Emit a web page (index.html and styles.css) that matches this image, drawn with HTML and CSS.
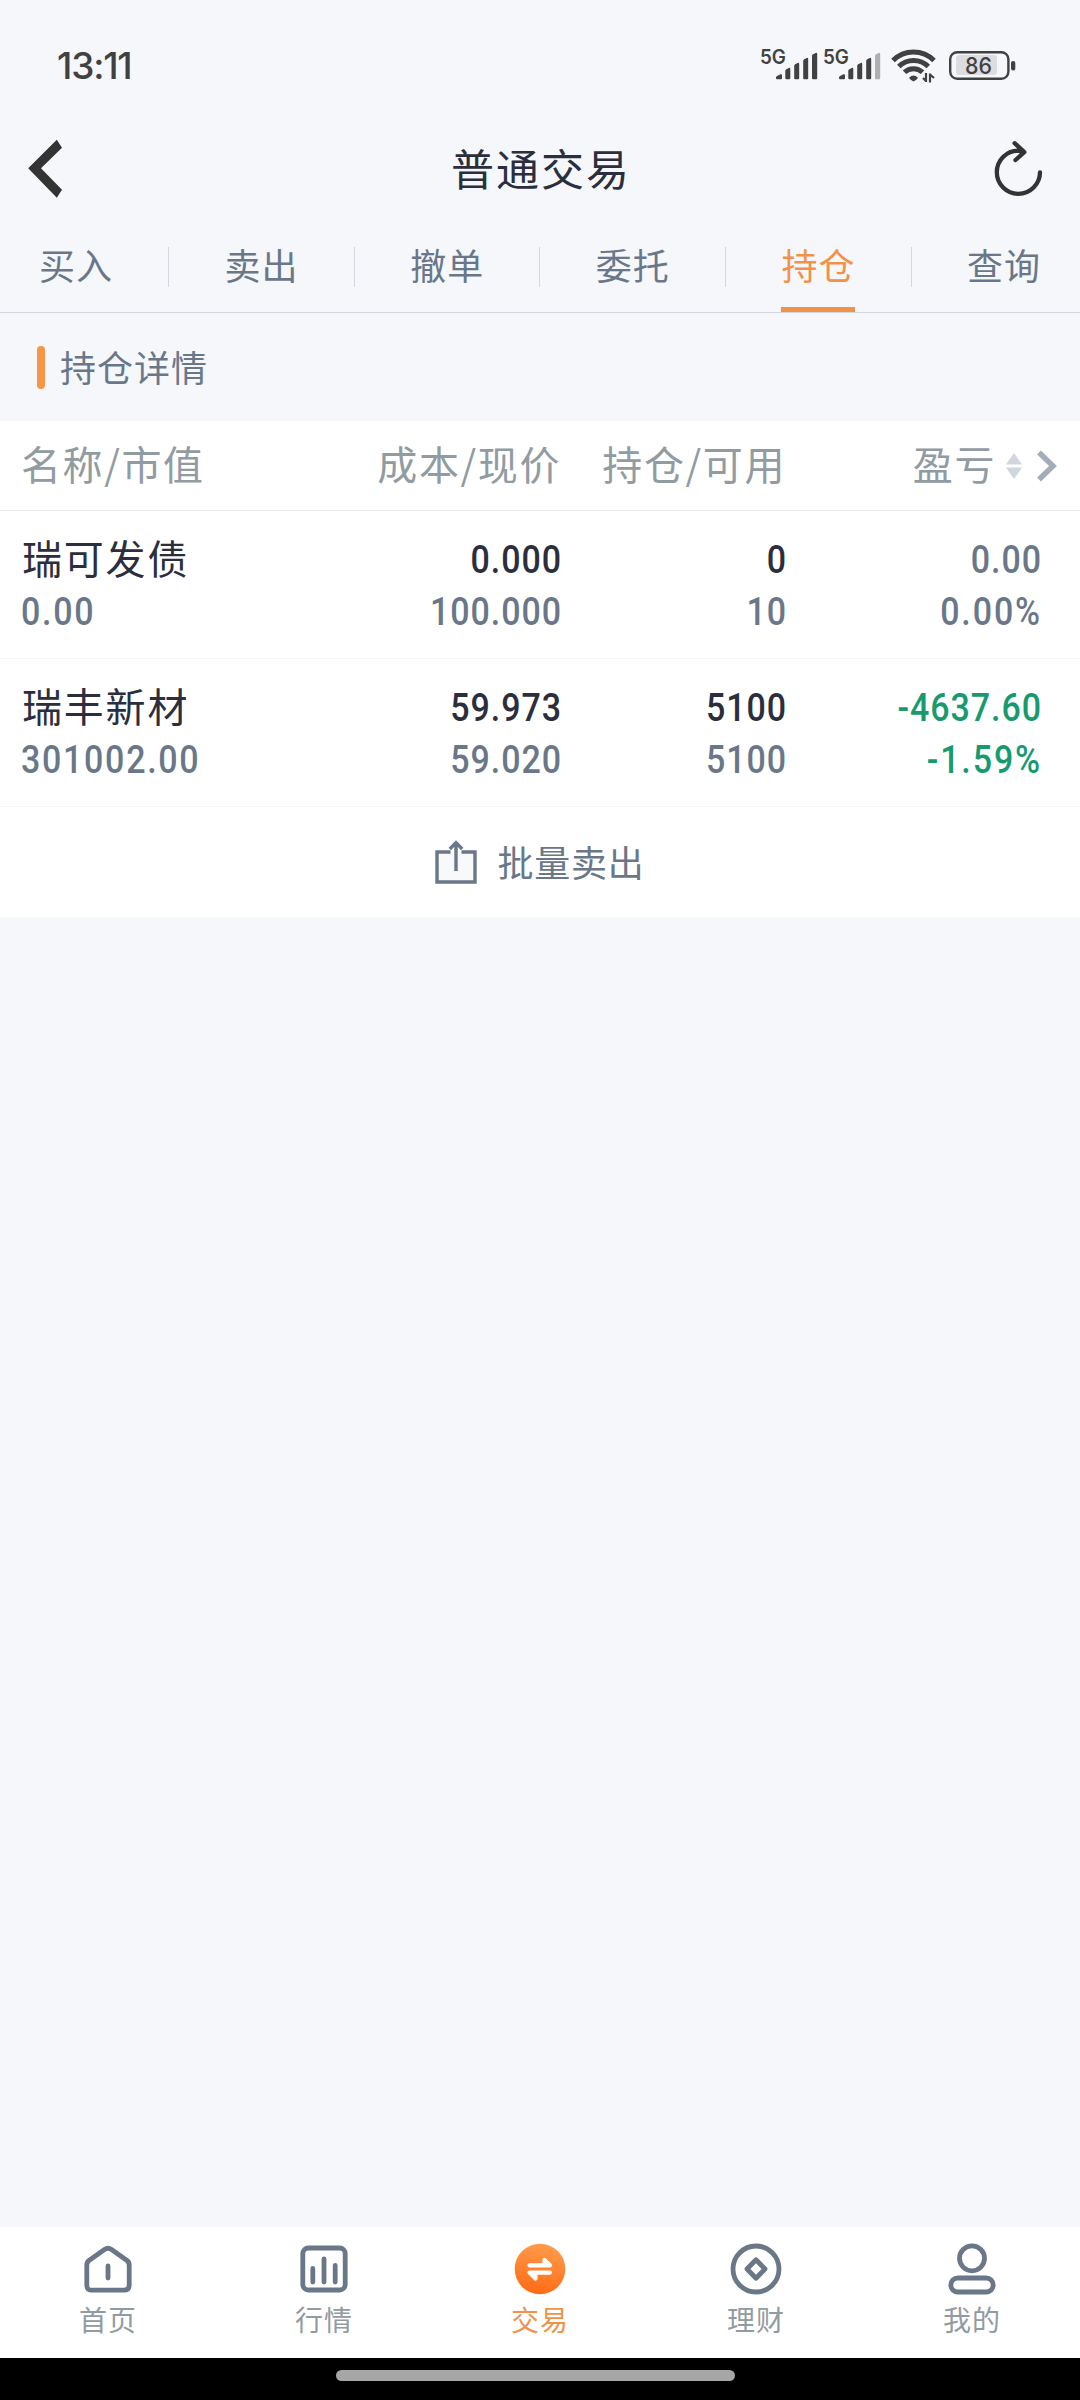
FILE: index.html
```html
<!DOCTYPE html>
<html lang="zh-CN">
<head>
<meta charset="utf-8">
<title>普通交易</title>
<link rel="stylesheet" href="styles.css">
</head>
<body>
<div class="app">
  <div class="status">
    <span class="clock">13:11</span>
    <svg class="status-icons" width="258" height="40" viewBox="0 0 258 40">
      <g class="net"><text x="0" y="19" textLength="26" lengthAdjust="spacingAndGlyphs">5G</text><text x="63" y="19" textLength="26" lengthAdjust="spacingAndGlyphs">5G</text></g>
      <g fill="#414141">
        <path id="sig" d="M16 32.500q0-1 1-1.600l3.500-1.600q1.500-.3 1.500 1v3q0 1-1 1h-4q-1 0-1-1zM25.300 25.800q0-1 1-1.600l2.500-1.300q1.500-.3 1.500 1v9.400q0 1-1 1h-3q-1 0-1-1zM34.200 20.800q0-1 1-1.600l2.500-1.300q1.500-.3 1.500 1v14.400q0 1-1 1h-3q-1 0-1-1zM43.200 15.800q0-1 1-1.600l2.500-1.300q1.500-.3 1.500 1v19.400q0 1-1 1h-3q-1 0-1-1z"/>
        <path id="last" d="M52 10.800q0-1 1-1.600l2.700-1.300q1.500-.3 1.500 1v24.400q0 1-1 1h-3.200q-1 0-1-1z"/>
        <use href="#sig" x="63"/>
      </g>
      <path d="M115 10.800q0-1 1-1.600l2.700-1.300q1.500-.3 1.500 1v24.400q0 1-1 1h-3.200q-1 0-1-1z" fill="#b0b0b2"/>
      <g fill="none" stroke="#414141" stroke-width="5">
        <path d="M133 15.500a29 29 0 0 1 41 0"/>
        <path d="M138.800 21.500a21 21 0 0 1 29.500 0"/>
        <path d="M144.500 27.300a13 13 0 0 1 18 0"/>
      </g>
      <path d="M149.300 32.500q4.200-4 8.400 0q.5 1.500-4.200 4q-4.700-2.500-4.200-4z" fill="#414141"/>
      <path d="M166 28v9M166 36l-3-3M170 37.500v-9M170 29.500l4 3.500" stroke="#414141" stroke-width="2.200" fill="none"/>
      <rect x="190.200" y="7.200" width="58.200" height="26.600" rx="7" fill="none" stroke="#414141" stroke-width="2.400"/>
      <rect x="196" y="10" width="41" height="20" rx="3" fill="#dcdde0"/>
      <rect x="251" y="16" width="4.300" height="9.500" rx="2" fill="#414141"/>
      <text class="batt" x="205" y="29" textLength="27" lengthAdjust="spacingAndGlyphs">86</text>
    </svg>
  </div>
  <header class="bar">
    <svg width="36" height="60" viewBox="28 140 36 60"><path d="M56.800 140.700L62 148.700L41 169.300L62 190.700L56.800 198.700L28.200 169.300z" fill="#333"/></svg>
    <h1 class="title">普通交易</h1>
    <svg width="50" height="58" viewBox="993 140 50 58" fill="none" stroke="#333" stroke-width="4.300" stroke-linecap="round" stroke-linejoin="round"><path d="M1040 172.300A21.600 21.600 0 1 1 1018.300 150.600L1024 151.800M1014.600 143.200L1024.300 152.200L1015.500 160"/></svg>
  </header>
  <nav class="tabs">
    <a class="tab">买入</a><i class="sep"></i>
    <a class="tab">卖出</a><i class="sep"></i>
    <a class="tab">撤单</a><i class="sep"></i>
    <a class="tab">委托</a><i class="sep"></i>
    <a class="tab active">持仓</a><i class="sep"></i>
    <a class="tab">查询</a>
  </nav>
  <div class="section"><i class="mark"></i><span>持仓详情</span></div>
  <main class="holdings">
    <div class="grid head">
      <span>名称/市值</span><span class="r">成本/现价</span><span class="r">持仓/可用</span><span class="r">盈亏</span>
      <svg class="sort" width="52" height="32" viewBox="1005 449 52 32">
        <path d="M1006 463.500L1014 452L1022 463.500zM1006 466.500L1014 478L1022 466.500z" fill="#d0d6dd"/>
        <path d="M1039 451.500L1053 465L1039 478.500" fill="none" stroke="#a3acb9" stroke-width="5.400"/>
      </svg>
    </div>
    <div class="grid row">
      <div><div class="name">瑞可发债</div><div class="num sub wide">0.00</div></div>
      <div class="r"><div class="num">0.000</div><div class="num sub">100.000</div></div>
      <div class="r"><div class="num">0</div><div class="num sub">10</div></div>
      <div class="r"><div class="num sub">0.00</div><div class="num sub pct">0.00%</div></div>
    </div>
    <div class="grid row">
      <div><div class="name">瑞丰新材</div><div class="num sub wide">301002.00</div></div>
      <div class="r"><div class="num">59.973</div><div class="num sub">59.020</div></div>
      <div class="r"><div class="num">5100</div><div class="num sub">5100</div></div>
      <div class="r"><div class="num down">-4637.60</div><div class="num down pct">-1.59%</div></div>
    </div>
    <div class="batch">
      <svg width="42" height="44" viewBox="0 0 42 44" fill="none" stroke="#697789" stroke-width="3.400"><path d="M15.500 12H2V42H40V12H26.500" fill="#f8f9fa"/><path d="M21 31V3M14.800 9L21 2.600L27.200 9"/></svg>
      <span>批量卖出</span>
    </div>
  </main>
  <footer class="dock">
    <a class="item"><svg width="52" height="52" viewBox="0 0 52 52"><path d="M22.500 6.500q3.500-2.500 7 0l15.500 11q2.200 1.700 2.200 4.500v20q0 5.200-5.200 5.200H10q-5.200 0-5.200-5.200V22q0-2.800 2.200-4.500zM26 23v12"/></svg><span>首页</span></a>
    <a class="item"><svg width="52" height="52" viewBox="0 0 52 52"><rect x="4.800" y="5" width="42.400" height="42" rx="5.500"/><path d="M14.800 25.500v13.500M26 16v23M37.200 22.500v16.500"/></svg><span>行情</span></a>
    <a class="item on"><svg width="52" height="52" viewBox="0 0 52 52"><defs><linearGradient id="glow" x1=".6" y1="0" x2=".4" y2="1"><stop offset="0" stop-color="#ff9c4c"/><stop offset="1" stop-color="#ff6b14"/></linearGradient></defs><circle cx="26" cy="26" r="25.300" fill="url(#glow)" stroke="none"/><path d="M15.500 22.300H36L30.500 17V22M36 29.600H15.500L21.500 35.500V30" stroke="#fff" stroke-width="4.200"/></svg><span>交易</span></a>
    <a class="item"><svg width="52" height="52" viewBox="0 0 52 52"><circle cx="26" cy="26" r="23"/><path d="M26 16.800L35 26L26 35.200L17 26z"/></svg><span>理财</span></a>
    <a class="item"><svg width="52" height="52" viewBox="0 0 52 52"><circle cx="26" cy="15.300" r="12.500"/><rect x="4.800" y="35" width="42.400" height="14" rx="7"/></svg><span>我的</span></a>
  </footer>
  <div class="gesture"><i></i></div>
</div>
</body>
</html>
```
FILE: styles.css
```css
* { box-sizing: border-box; margin: 0; padding: 0; }
body {
  width: 1080px;
  font-family: "Noto Sans CJK SC", sans-serif;
  color: #2a2e3d;
  background: #f5f7fb;
}
.app { display: flex; flex-direction: column; height: 2400px; overflow: hidden; }
.status { display: flex; justify-content: space-between; height: 130px; padding: 45px 62px 0 57px; }
.clock { font: 500 37px/42px Inter, sans-serif; letter-spacing: -1.2px; color: #414141; }
.status-icons { display: block; }
.net text { font: 600 20px Inter, sans-serif; fill: #414141; }
.batt { font: 500 23px Inter, sans-serif; fill: #414141; }

.bar { display: grid; grid-template-columns: 50px 1fr 50px; align-items: center; height: 78px; padding: 0 37px 0 28px; }
.title { padding-left: 11px; padding-bottom: 4px; font-size: 43px; font-weight: 400; line-height: 60px; letter-spacing: 2px; text-align: center; }

.tabs {
  display: flex; align-items: center; justify-content: space-between;
  height: 105px; padding: 6px 39px 0; border-bottom: 1px solid #d4d8de;
}
.tab {
  width: 74px; height: 98px; line-height: 101px; white-space: nowrap;
  font-size: 36px; letter-spacing: 1px; text-align: center; color: #697789;
}
.tab.active { color: #f0924a; border-bottom: 5px solid #f0924a; }
.sep { width: 1px; height: 40px; margin-top: 7px; background: #d4d8de; }

.section { display: flex; align-items: center; gap: 15px; height: 108px; padding-left: 37px; font-size: 36px; letter-spacing: 1px; color: #697789; }
.section span { padding-bottom: 3px; }
.mark { width: 8px; height: 43px; border-radius: 4px; background: #f79646; }

.holdings { background: #fff; }
.grid { display: grid; grid-template-columns: 300px 240px 225px 255px; padding-left: 21px; }
.r { text-align: right; }
.head { grid-template-columns: 300px 240px 225px 210px 1fr; align-items: center; height: 90px; border-bottom: 1px solid #e5e6e8; font-size: 40px; line-height: 60px; letter-spacing: 1.6px; color: #919ba2; }
.head span { padding-bottom: 5px; }
.sort { margin-left: 9px; }
.row { height: 148px; padding-top: 18px; border-bottom: 1px solid #f6f6f7; }
.name { padding-left: 1px; font-size: 40px; line-height: 56px; letter-spacing: 1.8px; }
.num { height: 52px; font: 500 39.500px/56px Roboto, sans-serif; letter-spacing: 1.1px; transform: scaleX(.86); transform-origin: 100% 50%; }
.name + .num { margin-top: -1px; }
.r .num { position: relative; left: 1px; line-height: 61px; }
.r .pct { letter-spacing: 2.2px; }
.wide { letter-spacing: 2px; line-height: 56px; transform-origin: 0 50%; }
.sub { color: #697789; }
.down { color: #169a6e; }
.batch { display: flex; justify-content: center; align-items: center; gap: 20px; height: 110px; font-size: 36px; letter-spacing: .8px; color: #697789; }
.batch span { padding-bottom: 3px; }

.dock { display: flex; height: 131px; margin-top: auto; background: #fff; }
.item { flex: 1; display: flex; flex-direction: column; align-items: center; padding-top: 16px; font-size: 28px; line-height: 40px; letter-spacing: 1px; color: #919ba2; }
.item svg { display: block; margin-bottom: 4px; fill: none; stroke: #697789; stroke-width: 4.800px; stroke-linecap: round; stroke-linejoin: round; }
.item.on { color: #f0924a; }
.gesture { display: flex; justify-content: center; height: 42px; padding: 12px 9px 0 0; background: #000; }
.gesture i { width: 399px; height: 11px; border-radius: 6px; background: #a6a6a6; }
```
